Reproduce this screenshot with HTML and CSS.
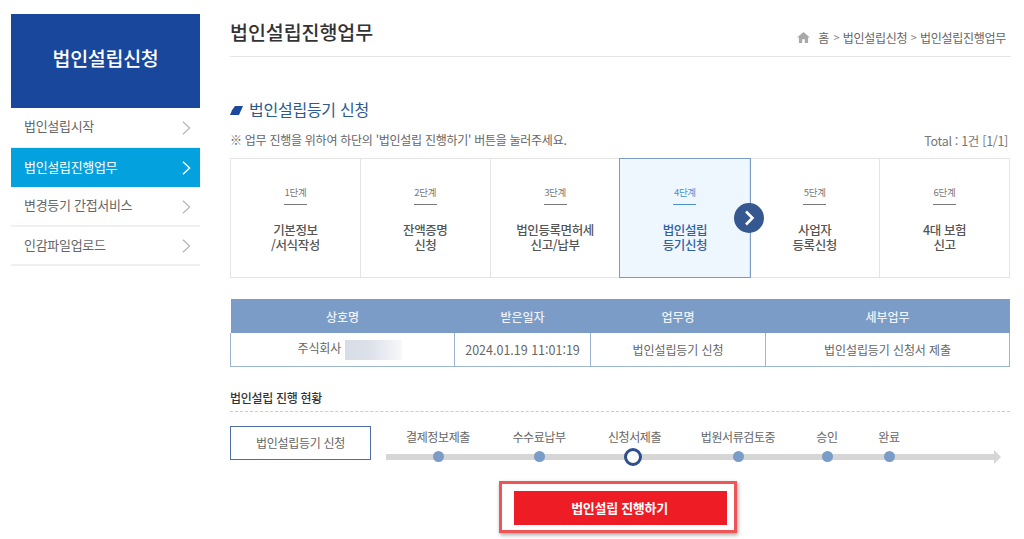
FILE: index.html
```html
<!DOCTYPE html>
<html lang="ko">
<head>
<meta charset="utf-8">
<title>법인설립진행업무</title>
<link rel="stylesheet" href="styles.css">
</head>
<body>
<div class="page">
  <aside class="side">
    <h2 class="side-title">법인설립신청</h2>
    <ul class="menu">
      <li class="menu-item"><span>법인설립시작</span><svg class="chev" viewBox="0 0 10 16"><path d="M1 1l7.5 7L1 15" fill="none" stroke="currentColor" stroke-width="1.3"/></svg></li>
      <li class="menu-item active"><span>법인설립진행업무</span><svg class="chev" viewBox="0 0 10 16"><path d="M1 1l7.5 7L1 15" fill="none" stroke="currentColor" stroke-width="1.5"/></svg></li>
      <li class="menu-item"><span>변경등기 간접서비스</span><svg class="chev" viewBox="0 0 10 16"><path d="M1 1l7.5 7L1 15" fill="none" stroke="currentColor" stroke-width="1.3"/></svg></li>
      <li class="menu-item"><span>인감파일업로드</span><svg class="chev" viewBox="0 0 10 16"><path d="M1 1l7.5 7L1 15" fill="none" stroke="currentColor" stroke-width="1.3"/></svg></li>
    </ul>
  </aside>
  <main class="main">
    <header class="head">
      <h1 class="title">법인설립진행업무</h1>
      <nav class="crumbs">
        <svg class="home" viewBox="0 0 14 12"><path d="M7 0L0 6h2v6h3.6V8h2.8v4H12V6h2z" fill="#a9a9a9"/></svg>
        <span class="crumb-home">홈</span><span class="sep">&gt;</span><span>법인설립신청</span><span class="sep">&gt;</span><span>법인설립진행업무</span>
      </nav>
    </header>
    <h3 class="section"><svg class="mark" viewBox="0 0 13 9"><path d="M5 0H13L9 9H0Q2 3 5 0z" fill="#1b4a9c"/></svg>법인설립등기 신청</h3>
    <div class="note-row">
      <p class="note">※ 업무 진행을 위하여 하단의 '법인설립 진행하기' 버튼을 눌러주세요.</p>
      <p class="total">Total : 1건 [1/1]</p>
    </div>
    <ol class="steps">
      <li class="step"><span class="num">1단계</span><strong class="name">기본정보<br>/서식작성</strong></li>
      <li class="step"><span class="num">2단계</span><strong class="name">잔액증명<br>신청</strong></li>
      <li class="step"><span class="num">3단계</span><strong class="name">법인등록면허세<br>신고/납부</strong></li>
      <li class="step current"><span class="num">4단계</span><strong class="name">법인설립<br>등기신청</strong>
        <span class="next"><svg viewBox="0 0 30 30"><path d="M12 8.5l6.5 6.5-6.5 6.5" fill="none" stroke="#fff" stroke-width="2.6"/></svg></span></li>
      <li class="step"><span class="num">5단계</span><strong class="name">사업자<br>등록신청</strong></li>
      <li class="step"><span class="num">6단계</span><strong class="name">4대 보험<br>신고</strong></li>
    </ol>
    <table class="info">
      <thead><tr><th class="c1">상호명</th><th class="c2">받은일자</th><th class="c3">업무명</th><th class="c4">세부업무</th></tr></thead>
      <tbody><tr>
        <td class="company">주식회사 <span class="blur"></span></td>
        <td class="date">2024.01.19 11:01:19</td>
        <td>법인설립등기 신청</td>
        <td>법인설립등기 신청서 제출</td>
      </tr></tbody>
    </table>
    <h4 class="sub">법인설립 진행 현황</h4>
    <div class="status">
      <div class="status-box">법인설립등기 신청</div>
      <div class="progress">
        <div class="p-step"><span>결제정보제출</span><i class="dot"></i></div>
        <div class="p-step"><span>수수료납부</span><i class="dot"></i></div>
        <div class="p-step"><span class="tight">신청서 제출</span><i class="dot now"></i></div>
        <div class="p-step"><span>법원서류검토중</span><i class="dot"></i></div>
        <div class="p-step"><span>승인</span><i class="dot"></i></div>
        <div class="p-step"><span>완료</span><i class="dot"></i></div>
      </div>
    </div>
    <div class="action">
      <div class="highlight"><button class="go">법인설립 진행하기</button></div>
    </div>
  </main>
</div>
</body>
</html>
```

FILE: styles.css
```css
* { box-sizing: border-box; }
html, body { margin: 0; padding: 0; background: #fff; }
body { font-family: "Noto Sans CJK KR", "Noto Sans", sans-serif; color: #555; overflow: hidden; }
h1, h2, h3, h4, p, ul, ol { margin: 0; padding: 0; list-style: none; }
.page { display: flex; width: 1024px; height: 539px; padding: 14px 0 0 11px; }

.side { width: 189px; flex: none; }
.side-title { height: 94px; background: #19479b; color: #fff; font-size: 19.5px; font-weight: 500; display: flex; align-items: center; justify-content: center; letter-spacing: -0.3px; padding-bottom: 7px; }
.menu-item { height: 39.5px; display: flex; align-items: center; justify-content: space-between; padding: 0 9px 2px 13px; font-size: 13px; letter-spacing: -0.3px; color: #666; border-bottom: 2px solid #f0f0f0; }
.menu-item:first-child { border-bottom: 1px solid #e8edf3; padding-bottom: 3px; }
.menu-item.active { background: #04a1df; color: #fff; border-bottom: 0; }
.chev { width: 9px; height: 16px; color: #b4b4b4; margin-top: 4px; }
.active .chev { color: #fff; }

.main { width: 781px; margin-left: 30px; flex: none; }
.head { height: 43px; border-bottom: 1px solid #e6e6e6; display: flex; justify-content: space-between; width: 781px; }
.title { font-size: 19.5px; font-weight: 500; color: #333; line-height: 26px; margin-top: 5px; letter-spacing: -0.05px; }
.crumbs { display: flex; align-items: center; font-size: 12px; letter-spacing: -0.3px; color: #666; height: 20px; margin-top: 13px; padding-right: 5px; }
.home { width: 13px; height: 11px; margin-right: 8px; }
.crumb-home { margin-right: 1px; }
.sep { font-size: 11px; margin: 0 3.5px; color: #888; }

.section { font-size: 16px; font-weight: 400; color: #2b5a8f; line-height: 22px; margin-top: 41px; display: flex; align-items: center; letter-spacing: -0.25px; }
.mark { width: 13px; height: 9px; margin-right: 6px; margin-top: 2px; }
.note-row { display: flex; justify-content: space-between; align-items: center; height: 18px; margin-top: 10px; width: 778px; font-size: 12px; letter-spacing: -0.27px; color: #666; }
.total { font-size: 12.5px; letter-spacing: -0.3px; color: #777; margin-top: 2px; }

.steps { display: flex; width: 780px; height: 120px; margin-top: 10px; border: 1px solid #e4e4e4; }
.step { flex: 1 1 0; position: relative; display: flex; flex-direction: column; align-items: center; border-right: 1px solid #e4e4e4; padding-top: 26px; }
.step:last-child { border-right: 0; }
.num { font-size: 9.5px; line-height: 14px; letter-spacing: -0.3px; color: #777; padding-bottom: 5px; border-bottom: 1px solid #777; width: 23px; text-align: center; white-space: nowrap; display: flex; justify-content: center; }
.name { margin-top: 17px; font-size: 12.5px; line-height: 15px; font-weight: 500; text-align: center; letter-spacing: -0.4px; color: #555; }
.current { background: #eef6fe; outline: 1px solid #7b9cc6; outline-offset: 0; z-index: 1; }
.current .num { color: #4a90d2; border-bottom-color: #4a90d2; }
.current .name { color: #2f62a5; }
.next { position: absolute; right: -15px; top: 44px; width: 30px; height: 30px; border-radius: 50%; background: #34588f; display: block; }
.next svg { display: block; width: 30px; height: 30px; }

.info { border-collapse: collapse; table-layout: fixed; width: 779px; margin-top: 21px; font-size: 12px; letter-spacing: -0.1px; }
.info th { height: 34px; background: #7b9cc6; color: #eef3fa; font-weight: 500; padding: 0; }
.info td { height: 33px; border: 1px solid #9db5d4; border-top: 0; text-align: center; color: #666; padding: 0; vertical-align: middle; }
.c1 { width: 224px; } .c2 { width: 136px; } .c3 { width: 175px; } .c4 { width: 244px; }
.info .company { padding-left: 14px; }
.info .date { font-size: 12.5px; letter-spacing: 0; }
.blur { display: inline-block; width: 57px; height: 20px; vertical-align: middle; background: linear-gradient(90deg, #d8dce6 0%, #dde1ea 45%, #f7f8fa 100%); }

.sub { font-size: 12px; font-weight: 500; color: #333; letter-spacing: -0.3px; line-height: 16px; margin-top: 23px; padding-bottom: 6px; border-bottom: 1px dashed #ccc; width: 780px; height: 22px; }
.status { display: flex; margin-top: 14px; width: 780px; }
.status-box { width: 141px; height: 34px; border: 1px solid #4d6ea6; display: flex; align-items: center; justify-content: center; font-size: 12px; letter-spacing: -0.3px; color: #666; flex: none; }
.progress { margin-left: 15px; width: 615px; height: 34px; position: relative; display: grid; grid-template-columns: 104px 98px 90px 120px 58px 66px; }
.progress::before { content: ""; position: absolute; left: 0; right: 6px; top: 28px; height: 6px; background: #d6d6d6; }
.progress::after { content: ""; position: absolute; right: 0; top: 24px; border-left: 7px solid #d6d6d6; border-top: 7px solid transparent; border-bottom: 7px solid transparent; }
.p-step { position: relative; display: flex; flex-direction: column; align-items: center; font-size: 12px; letter-spacing: -0.4px; color: #666; white-space: nowrap; height: 34px; }
.p-step span { line-height: 16px; margin-top: 3px; }
.p-step .tight { word-spacing: -3px; margin-left: 3px; }
.dot { position: absolute; top: 25px; left: 50%; margin-left: -5.5px; width: 11px; height: 11px; border-radius: 50%; background: #7b9cc6; }
.dot.now { width: 18px; height: 18px; top: 22px; margin-left: -9px; background: #fff; border: 3px solid #2d4f8e; }

.action { display: flex; margin-top: 21px; padding-left: 269px; }
.highlight { width: 238px; height: 52px; border: 3px solid #ef5555; background: #fff; box-shadow: 1px 2px 4px rgba(0,0,0,.35); padding: 7px 7px 5px 12px; }
.go { display: flex; align-items: center; justify-content: center; width: 213px; height: 34px; border: 0; padding: 0 2px 0 0; background: #ee1c25; color: #fff; font: 700 13px "Noto Sans CJK KR", sans-serif; letter-spacing: -0.3px; }
```
